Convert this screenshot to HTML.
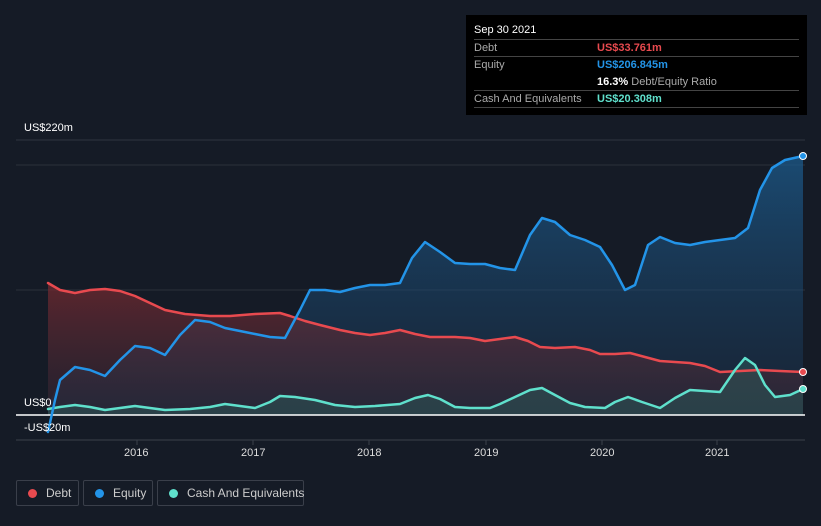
<!DOCTYPE html><html><head><style>
body{margin:0;background:#151b26;font-family:"Liberation Sans",sans-serif;width:821px;height:526px;overflow:hidden;position:relative;color:#fff}
.lab{position:absolute;font-size:11px;color:#fff}
.tt{position:absolute;left:466px;top:15px;width:341px;height:100px;background:#000;font-size:11px}
.row{position:absolute;left:8px;right:8px;border-top:1px solid #444;height:17px}
.row span{position:absolute;top:2px;white-space:nowrap}
.lg{position:absolute;top:480px;height:26px;border:1px solid #3a3f4a;border-radius:2px;font-size:12px;color:#ccc;line-height:24px;box-sizing:border-box;white-space:nowrap}
.lg i{display:inline-block;width:9px;height:9px;border-radius:50%;margin:0 9px 0 11px;vertical-align:-1px}
</style></head><body>
<svg width="821" height="526" style="position:absolute;left:0;top:0">
<defs>
<linearGradient id="gb" x1="0" y1="0" x2="0" y2="1"><stop offset="0" stop-color="#1c5f93" stop-opacity=".7"/><stop offset="1" stop-color="#1c3a5a" stop-opacity=".3"/></linearGradient>
<linearGradient id="gr" x1="0" y1="0" x2="0" y2="1"><stop offset="0" stop-color="#7a2a30" stop-opacity=".7"/><stop offset="1" stop-color="#3a2a38" stop-opacity=".4"/></linearGradient>
</defs>
<line x1="16" y1="140" x2="805" y2="140" stroke="#2e3440"/>
<line x1="16" y1="165" x2="805" y2="165" stroke="#2a303b"/>
<line x1="16" y1="290" x2="805" y2="290" stroke="#2a303b"/>
<line x1="16" y1="440" x2="805" y2="440" stroke="#3a404b"/>
<g stroke="#3a404b"><line x1="137" y1="440" x2="137" y2="445"/><line x1="253" y1="440" x2="253" y2="445"/><line x1="369" y1="440" x2="369" y2="445"/><line x1="486" y1="440" x2="486" y2="445"/><line x1="602" y1="440" x2="602" y2="445"/><line x1="717" y1="440" x2="717" y2="445"/></g>
<polygon fill="url(#gb)" points="48,415 48,405 60,380 75,367 90,370 105,376 120,360 135,346 150,348 165,355 180,335 195,320 210,322 225,328 240,331 255,334 270,337 285,338 300,310 310,290 325,290 340,292 355,288 370,285 385,285 400,283 412,258 425,242 440,252 455,263 470,264 485,264 500,268 515,270 530,235 542,218 555,222 570,235 585,240 600,247 612,265 625,290 635,285 648,245 660,237 675,243 690,245 705,242 720,240 735,238 748,228 760,190 772,168 785,160 803,156 803,415"/>
<polygon fill="url(#gr)" points="48,415 48,283 60,290 75,293 90,290 105,289 120,291 135,296 150,303 165,310 185,314 210,316 230,316 255,314 280,313 290,316 305,321 320,325 340,330 355,333 370,335 385,333 400,330 415,334 430,337 455,337 470,338 485,341 500,339 515,337 528,341 540,347 555,348 575,347 590,350 600,354 615,354 630,353 645,357 660,361 690,363 705,366 720,372 740,371 760,370 780,371 803,372 803,415"/>
<polygon fill="#2d5a5a" fill-opacity=".5" points="48,415 48,409 60,407 75,405 90,407 105,410 120,408 135,406 150,408 165,410 190,409 210,407 225,404 240,406 255,408 270,402 280,396 295,397 315,400 335,405 355,407 375,406 400,404 415,398 428,395 440,399 455,407 470,408 490,408 500,404 515,397 530,390 542,388 555,395 570,403 585,407 605,408 615,402 628,397 642,402 660,408 675,398 690,390 705,391 720,392 735,370 745,358 755,365 765,385 775,397 790,395 803,389 803,415"/>
<line x1="16" y1="415" x2="805" y2="415" stroke="#fff" stroke-width="1.5"/>
<g fill="none" stroke-width="2.5" stroke-linejoin="round" stroke-linecap="round">
<polyline stroke="#e84a4f" points="48,283 60,290 75,293 90,290 105,289 120,291 135,296 150,303 165,310 185,314 210,316 230,316 255,314 280,313 290,316 305,321 320,325 340,330 355,333 370,335 385,333 400,330 415,334 430,337 455,337 470,338 485,341 500,339 515,337 528,341 540,347 555,348 575,347 590,350 600,354 615,354 630,353 645,357 660,361 690,363 705,366 720,372 740,371 760,370 780,371 803,372"/>
<polyline stroke="#5fe0cc" points="48,409 60,407 75,405 90,407 105,410 120,408 135,406 150,408 165,410 190,409 210,407 225,404 240,406 255,408 270,402 280,396 295,397 315,400 335,405 355,407 375,406 400,404 415,398 428,395 440,399 455,407 470,408 490,408 500,404 515,397 530,390 542,388 555,395 570,403 585,407 605,408 615,402 628,397 642,402 660,408 675,398 690,390 705,391 720,392 735,370 745,358 755,365 765,385 775,397 790,395 803,389"/>
<polyline stroke="#2394e8" points="48,432 55,400 60,380 75,367 90,370 105,376 120,360 135,346 150,348 165,355 180,335 195,320 210,322 225,328 240,331 255,334 270,337 285,338 300,310 310,290 325,290 340,292 355,288 370,285 385,285 400,283 412,258 425,242 440,252 455,263 470,264 485,264 500,268 515,270 530,235 542,218 555,222 570,235 585,240 600,247 612,265 625,290 635,285 648,245 660,237 675,243 690,245 705,242 720,240 735,238 748,228 760,190 772,168 785,160 803,156"/>
</g>
<circle cx="803" cy="156" r="3.5" fill="#2394e8" stroke="#fff"/>
<circle cx="803" cy="372" r="3.5" fill="#e84a4f" stroke="#fff"/>
<circle cx="803" cy="389" r="3.5" fill="#5fe0cc" stroke="#fff"/>
</svg>
<div class="lab" style="left:24px;top:122px">US$220m</div>
<div class="lab" style="left:24px;top:397px">US$0</div>
<div class="lab" style="left:24px;top:422px">-US$20m</div>
<div class="lab" style="left:124px;top:447px;color:#ddd">2016</div>
<div class="lab" style="left:241px;top:447px;color:#ddd">2017</div>
<div class="lab" style="left:357px;top:447px;color:#ddd">2018</div>
<div class="lab" style="left:474px;top:447px;color:#ddd">2019</div>
<div class="lab" style="left:590px;top:447px;color:#ddd">2020</div>
<div class="lab" style="left:705px;top:447px;color:#ddd">2021</div>
<div class="tt">
<div style="position:absolute;left:8px;top:9px;color:#fff">Sep 30 2021</div>
<div class="row" style="top:24px"><span style="color:#aaa">Debt</span><span style="left:123px;color:#e84a4f;font-weight:bold">US$33.761m</span></div>
<div class="row" style="top:41px;height:34px"><span style="color:#aaa">Equity</span><span style="left:123px;color:#2394e8;font-weight:bold">US$206.845m</span><span style="left:123px;top:19px;color:#aaa"><b style="color:#fff">16.3%</b> Debt/Equity Ratio</span></div>
<div class="row" style="top:75px"><span style="color:#aaa">Cash And Equivalents</span><span style="left:123px;color:#5fe0cc;font-weight:bold">US$20.308m</span></div>
<div class="row" style="top:92px;height:0"></div>
</div>
<div class="lg" style="left:16px;width:63px"><i style="background:#e84a4f"></i>Debt</div>
<div class="lg" style="left:83px;width:70px"><i style="background:#2394e8"></i>Equity</div>
<div class="lg" style="left:157px;width:147px"><i style="background:#5fe0cc"></i>Cash And Equivalents</div>
</body></html>
